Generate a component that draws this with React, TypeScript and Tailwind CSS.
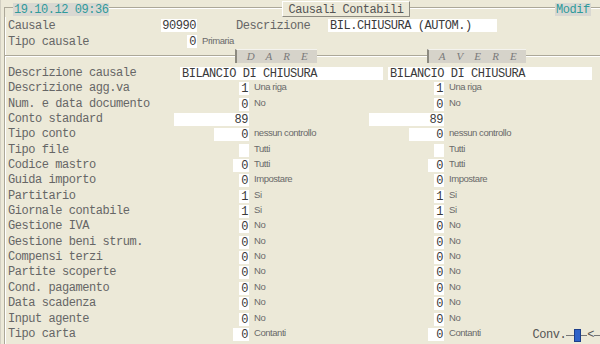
const mono = "font-['Liberation_Mono','Courier_New',monospace] text-[12px] tracking-[-0.45px]"
const note = "font-['Liberation_Sans',Arial,sans-serif] text-[9.5px] text-[#6a6a6a] leading-[12px] whitespace-nowrap"
const line = 'border-t border-[#aca899] shadow-[0_1px_0_#ffffff]'

type Row = { label: string; v: string; w: string; note: string }

const rows: Row[] = [
  { label: 'Descrizione agg.va', v: '1', w: 'w-[10px]', note: 'Una riga' },
  { label: 'Num. e data documento', v: '0', w: 'w-[10px]', note: 'No' },
  { label: 'Conto standard', v: '89', w: 'w-[75px]', note: '' },
  { label: 'Tipo conto', v: '0', w: 'w-[35px]', note: 'nessun controllo' },
  { label: 'Tipo file', v: '', w: 'w-[10px]', note: 'Tutti' },
  { label: 'Codice mastro', v: '0', w: 'w-[16px]', note: 'Tutti' },
  { label: 'Guida importo', v: '0', w: 'w-[10px]', note: 'Impostare' },
  { label: 'Partitario', v: '1', w: 'w-[10px]', note: 'Si' },
  { label: 'Giornale contabile', v: '1', w: 'w-[10px]', note: 'Si' },
  { label: 'Gestione IVA', v: '0', w: 'w-[10px]', note: 'No' },
  { label: 'Gestione beni strum.', v: '0', w: 'w-[10px]', note: 'No' },
  { label: 'Compensi terzi', v: '0', w: 'w-[10px]', note: 'No' },
  { label: 'Partite scoperte', v: '0', w: 'w-[10px]', note: 'No' },
  { label: 'Cond. pagamento', v: '0', w: 'w-[10px]', note: 'No' },
  { label: 'Data scadenza', v: '0', w: 'w-[10px]', note: 'No' },
  { label: 'Input agente', v: '0', w: 'w-[10px]', note: 'No' },
  { label: 'Tipo carta', v: '0', w: 'w-[16px]', note: 'Contanti' },
]

function Field({ w, value, left }: { w: string; value: string; left?: boolean }) {
  return (
    <div
      className={`${w} h-[13px] mt-[1px] bg-white leading-[14px] text-[#3a3a3a] whitespace-nowrap overflow-hidden ${
        left ? 'text-left pl-[2px]' : 'text-right pr-[1px]'
      }`}
    >
      {value}
    </div>
  )
}

function Tab({ letters, w }: { letters: string[]; w: string }) {
  return (
    <div
      className={`${w} h-[14px] bg-[#d6d3ca] border-l-2 border-l-[#8c8a80] border-t border-t-[#f4f3ee] flex items-center justify-around px-[4px] font-['Liberation_Serif',serif] italic text-[11px] text-[#7a7a7a]`}
    >
      {letters.map((l, i) => (
        <span key={i}>{l}</span>
      ))}
    </div>
  )
}

export default function App() {
  return (
    <div className={`w-[600px] h-[344px] bg-[#ece9d8] overflow-hidden border-l border-[#d2cfc2] text-[#666] ${mono}`}>
      {/* header bar */}
      <div className="flex items-start h-[17px]">
        <div className="w-[9px] h-[10px] ml-[3px] mt-[7px] border-t border-l border-[#aca899]" />
        <div className="w-[96px] h-[13px] mt-[3px] bg-[#d9d8d2] text-[#2f9a9a] leading-[15px] pl-[1px]">
          19.10.12 09:36
        </div>
        <div className={`w-[173px] mt-[7px] ${line}`} />
        <div className="w-[128px] h-[16px] mt-[1px] border border-l-white border-t-white border-r-[#8e8c82] border-b-[#8e8c82] text-center leading-[16px] text-[#555]">
          Causali Contabili
        </div>
        <div className={`w-[145px] mt-[7px] ${line}`} />
        <div className="w-[36px] h-[13px] mt-[3px] bg-[#d9d8d2] text-[#2f9a9a] leading-[15px] text-center">Modif</div>
        <div className={`flex-1 mt-[7px] ${line}`} />
      </div>

      <div className="ml-[3px] border-l border-[#aca899] shadow-[inset_1px_0_0_#ffffff] h-[327px]">
        <div className="pt-[1px]">
          {/* Causale */}
          <div className="flex items-start h-[16px] pl-[3px]">
            <div className="w-[153px] h-[15px] leading-[17px]">Causale</div>
            <Field w="w-[36px]" value="90990" />
            <div className="w-[92px] ml-[39px] h-[15px] leading-[17px]">Descrizione</div>
            <Field w="w-[169px]" value="BIL.CHIUSURA (AUTOM.)" left />
          </div>
          {/* Tipo causale */}
          <div className="flex items-start h-[15px] pl-[3px]">
            <div className="w-[179px] h-[15px] leading-[17px]">Tipo causale</div>
            <Field w="w-[10px]" value="0" />
            <div className={`pl-[5px] mt-[1px] ${note}`}>Primaria</div>
          </div>
        </div>

        {/* DARE / AVERE separator */}
        <div className="flex items-start h-[17px]">
          <div className={`w-[230px] mt-[6px] ${line}`} />
          <Tab w="w-[82px]" letters={['D', 'A', 'R', 'E']} />
          <div className={`w-[110px] mt-[6px] ${line}`} />
          <Tab w="w-[99px]" letters={['A', 'V', 'E', 'R', 'E']} />
          <div className={`flex-1 mt-[6px] ${line}`} />
        </div>

        {/* Descrizione causale */}
        <div className="flex items-start h-[15.35px] pl-[3px]">
          <div className="w-[172px] h-[15px] leading-[15px]">Descrizione causale</div>
          <Field w="w-[203px]" value="BILANCIO DI CHIUSURA" left />
          <div className="w-[5px]" />
          <Field w="w-[204px]" value="BILANCIO DI CHIUSURA" left />
        </div>

        {rows.map((r) => (
          <div key={r.label} className="flex items-start h-[15.35px] pl-[3px]">
            <div className="w-[152px] h-[15px] leading-[15px] whitespace-nowrap">{r.label}</div>
            <div className="w-[89px] flex justify-end">
              <Field w={r.w} value={r.v} />
            </div>
            <div className={`w-[106px] pl-[5px] ${note}`}>{r.note}</div>
            <div className="w-[89px] flex justify-end">
              <Field w={r.w} value={r.v} />
            </div>
            <div className={`flex-1 pl-[5px] ${note}`}>{r.note}</div>
            {r.label === 'Tipo carta' && (
              <div className="flex items-center h-[15px] mt-[1px]">
                <span className="leading-[15px] text-[#555]">Conv.</span>
                <span className="w-[8px] border-t border-[#777]" />
                <span className="w-[7px] h-[13px] bg-[#2f63c8] border border-[#1d3f8a]" />
                <span className="w-[6px] border-t border-[#777]" />
                <span className="leading-[15px] text-[#555]">&lt;</span>
                <span className="w-[6px] border-t border-[#777]" />
              </div>
            )}
          </div>
        ))}
      </div>
    </div>
  )
}
